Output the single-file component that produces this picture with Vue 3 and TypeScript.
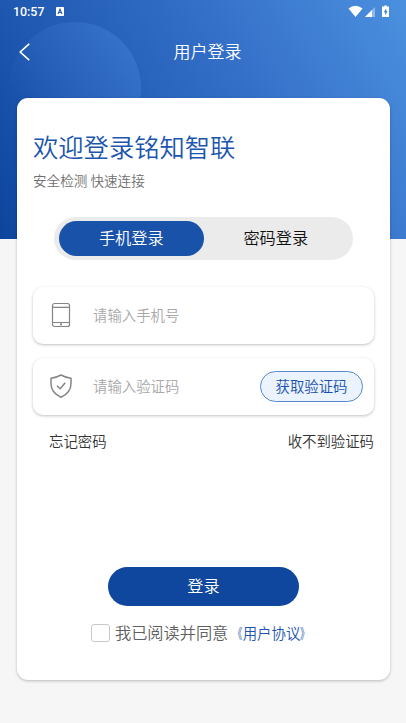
<script setup lang="ts">
import { ref } from 'vue'

type Mode = 'phone' | 'password'

const tabs: { id: Mode; label: string }[] = [
  { id: 'phone', label: '手机登录' },
  { id: 'password', label: '密码登录' },
]
const mode = ref<Mode>('phone')
const phone = ref('')
const code = ref('')
const agreed = ref(false)
</script>

<template>
  <div class="page">
    <div class="hero"><div class="orb"></div></div>

    <div class="content">
      <div class="status">
        <span class="time">10:57</span>
        <svg class="notice" viewBox="0 0 8 9">
          <rect width="8" height="9" rx="0.8" fill="#fff" />
          <path d="M2 7 L4 2.2 L6 7 M2.8 5.5 H5.2" fill="none" stroke="#2459ae" stroke-width="1.1" />
        </svg>
        <svg class="signals" viewBox="0 0 42 13">
          <path d="M0.5 3.4 Q7.5 -2 14.5 3.4 L7.5 12 Z" fill="#fff" />
          <path d="M27 2 V12 H17 Z" fill="#fff" fill-opacity="0.4" />
          <path d="M24 5 V12 H17 Z" fill="#fff" />
          <path d="M36.3 0.4 H38.8 V1.6 H41 V12 H34 V1.6 H36.3 Z" fill="#fff" />
          <path d="M38.3 3.5 L35.8 7.2 H37.2 V10.2 L39.6 6.2 H38.3 Z" fill="#3d7bce" />
        </svg>
      </div>

      <header class="nav">
        <button class="back" aria-label="返回">
          <svg viewBox="0 0 12 18"><path d="M10.2 0.8 L1.2 9 L10.2 17.2" fill="none" stroke="#fff" stroke-width="1.6" /></svg>
        </button>
        <h1>用户登录</h1>
      </header>

      <main class="card">
        <h2>欢迎登录铭知智联</h2>
        <p class="sub">安全检测 快速连接</p>

        <div class="tabs">
          <button
            v-for="tab in tabs"
            :key="tab.id"
            :class="['tab', { active: mode === tab.id }]"
            @click="mode = tab.id"
          >{{ tab.label }}</button>
        </div>

        <label class="field">
          <svg class="icon" viewBox="0 0 24 26" fill="none" stroke="#858585" stroke-width="1.2">
            <rect x="3.5" y="1.5" width="17" height="23" rx="2" />
            <path d="M3.5 5.4 H20.5 M3.5 20.5 H20.5" />
            <circle cx="12" cy="22.4" r="0.5" />
          </svg>
          <input v-model="phone" type="tel" placeholder="请输入手机号" />
        </label>

        <div class="field">
          <svg class="icon" viewBox="0 0 24 26" fill="none" stroke="#858585" stroke-width="1.5">
            <path d="M12 2 Q7 4.8 2 5.2 V10.5 C2 17.5 6.2 21.6 12 24.2 C17.8 21.6 22 17.5 22 10.5 V5.2 Q17 4.8 12 2 Z" stroke-linejoin="round" />
            <path d="M8 12.8 L11.2 15.7 L16.2 9.8" />
          </svg>
          <input v-model="code" placeholder="请输入验证码" />
          <button class="send">获取验证码</button>
        </div>

        <div class="help"><span>忘记密码</span><span>收不到验证码</span></div>

        <button class="login">登录</button>

        <label class="agree">
          <input v-model="agreed" type="checkbox" />
          <span>我已阅读并同意</span>
          <a><i class="open">《</i>用户协议<i class="close">》</i></a>
        </label>
      </main>
    </div>
  </div>
</template>

<style>
body {
  background: #f6f6f6;
}
</style>

<style scoped>
.page {
  position: relative;
  height: 723px;
  overflow: hidden;
  background: #f6f6f6;
  font-family: "Noto Sans CJK SC", sans-serif;
  font-weight: 350;
}
button {
  border: 0;
  padding: 0;
  font: inherit;
  background: none;
}
.hero {
  position: absolute;
  inset: 0 0 auto;
  height: 239px;
  overflow: hidden;
  background: linear-gradient(60deg, #0d459d 0%, #1d57b0 25%, #3570c8 62%, #4b90df 100%);
}
.orb {
  position: absolute;
  left: 9px;
  top: 22px;
  width: 132px;
  height: 132px;
  border-radius: 50%;
  background: linear-gradient(235deg, rgba(75, 137, 222, 0.5), rgba(60, 118, 207, 0.4) 35%, rgba(40, 90, 180, 0) 80%);
}
.content {
  position: relative;
}
.status {
  display: flex;
  align-items: center;
  height: 22px;
  padding: 0 16px 0 13px;
}
.time {
  padding-top: 2px;
  color: #fff;
  font: 500 12.4px/20px Roboto, sans-serif;
}
.notice {
  width: 8px;
  height: 9px;
  margin-left: 12px;
}
.signals {
  width: 42px;
  height: 13px;
  margin-left: auto;
}
.nav {
  display: grid;
  grid-template-columns: 40px 1fr 40px;
  align-items: center;
  height: 60px;
  padding: 0 0 0 9px;
}
.back {
  display: flex;
  padding-left: 10px;
}
.back svg {
  width: 12px;
  height: 18px;
}
h1 {
  margin: 0;
  padding-bottom: 3px;
  text-align: center;
  color: #fff;
  font-size: 17px;
  font-weight: 350;
}
.card {
  box-sizing: border-box;
  display: flex;
  flex-direction: column;
  height: 582px;
  margin: 16px 16px 0 17px;
  padding: 29px 16px 0;
  border-radius: 11px;
  background: #fff;
  box-shadow: 0 1px 3px rgba(0, 0, 0, 0.25);
}
h2 {
  margin: 0;
  color: #1b55ad;
  font-size: 25.3px;
  font-weight: 350;
  line-height: 38px;
}
.sub {
  margin: 5px 0 0;
  color: #707070;
  font-size: 13.6px;
  line-height: 20px;
}
.tabs {
  box-sizing: border-box;
  display: flex;
  width: 299px;
  height: 43px;
  margin: 27px 0 0 21px;
  padding: 4px 5px;
  border-radius: 22px;
  background: #ebebeb;
}
.tab {
  flex: 1;
  padding-bottom: 3px;
  border-radius: 18px;
  color: #111;
  font-size: 16.2px;
}
.tab.active {
  background: #1952a9;
  color: #fff;
}
.field {
  box-sizing: border-box;
  display: flex;
  align-items: center;
  height: 57px;
  margin-top: 14px;
  padding: 0 11px 0 16px;
  border-radius: 10px;
  background: #fff;
  box-shadow: 0 1px 3px rgba(0, 0, 0, 0.25);
}
.tabs + .field {
  margin-top: 27px;
}
.icon {
  flex: none;
  width: 24px;
  height: 26px;
  margin-bottom: 1px;
}
.field input {
  flex: 1;
  min-width: 0;
  margin-left: 20px;
  padding: 0 0 2px;
  border: 0;
  outline: 0;
  background: none;
  color: #333;
  font: 350 14.4px "Noto Sans CJK SC", sans-serif;
}
.field input::placeholder {
  color: #a8a8a8;
}
.send {
  box-sizing: border-box;
  width: 103px;
  height: 31px;
  padding-bottom: 2px;
  border: 1px solid #5c88cb;
  border-radius: 16px;
  background: #eaf3fe;
  color: #1951aa;
  font-size: 14.4px;
}
.help {
  display: flex;
  justify-content: space-between;
  margin-top: 15px;
  padding-left: 16px;
  color: #333;
  font-size: 14.4px;
  line-height: 21px;
}
.login {
  align-self: center;
  width: 191px;
  height: 39px;
  margin-top: 116px;
  padding-bottom: 3px;
  border-radius: 20px;
  background: #0f469e;
  color: #fff;
  font-size: 16.2px;
}
.agree {
  display: flex;
  align-items: center;
  height: 24px;
  margin: 15px 0 0 58px;
  color: #606060;
  font-size: 16.2px;
  white-space: nowrap;
}
.agree span,
.agree a {
  padding-bottom: 2px;
}
.agree input {
  appearance: none;
  box-sizing: border-box;
  flex: none;
  width: 19px;
  height: 18px;
  margin: 0 5px 0 0;
  border: 1px solid #c9c9c9;
  border-radius: 3px;
  background: #fff;
}
.agree a {
  color: #1b55ad;
  font-size: 14.4px;
}
.agree i {
  display: inline-block;
  font-style: normal;
}
.open {
  transform: scaleX(0.65);
  transform-origin: right;
}
.close {
  transform: scaleX(0.65);
  transform-origin: left;
}
</style>
